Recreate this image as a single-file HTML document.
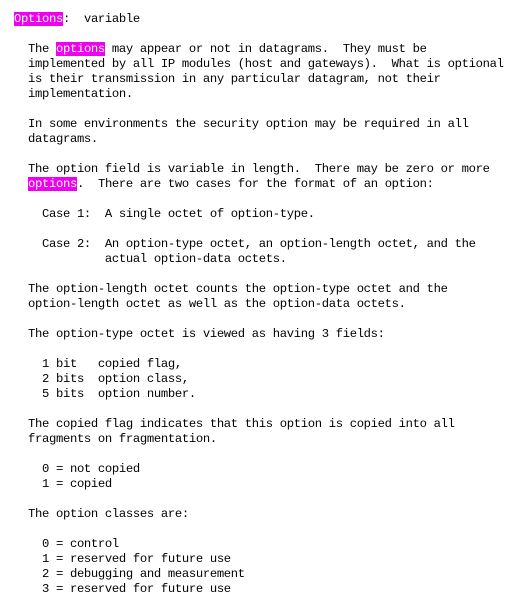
<!DOCTYPE html>
<html><head><style>
html,body{margin:0;background:#fff;}
pre{margin:0;position:absolute;left:14px;top:12px;font-family:"Liberation Mono",monospace;font-size:12.2px;letter-spacing:-0.32px;line-height:15px;color:#000;}
b{font-weight:normal;background:#f000f0;color:#fff;}
</style></head><body>
<pre><b>Options</b>:  variable

  The <b>options</b> may appear or not in datagrams.  They must be
  implemented by all IP modules (host and gateways).  What is optional
  is their transmission in any particular datagram, not their
  implementation.

  In some environments the security option may be required in all
  datagrams.

  The option field is variable in length.  There may be zero or more
  <b>options</b>.  There are two cases for the format of an option:

    Case 1:  A single octet of option-type.

    Case 2:  An option-type octet, an option-length octet, and the
             actual option-data octets.

  The option-length octet counts the option-type octet and the
  option-length octet as well as the option-data octets.

  The option-type octet is viewed as having 3 fields:

    1 bit   copied flag,
    2 bits  option class,
    5 bits  option number.

  The copied flag indicates that this option is copied into all
  fragments on fragmentation.

    0 = not copied
    1 = copied

  The option classes are:

    0 = control
    1 = reserved for future use
    2 = debugging and measurement
    3 = reserved for future use</pre>
</body></html>
